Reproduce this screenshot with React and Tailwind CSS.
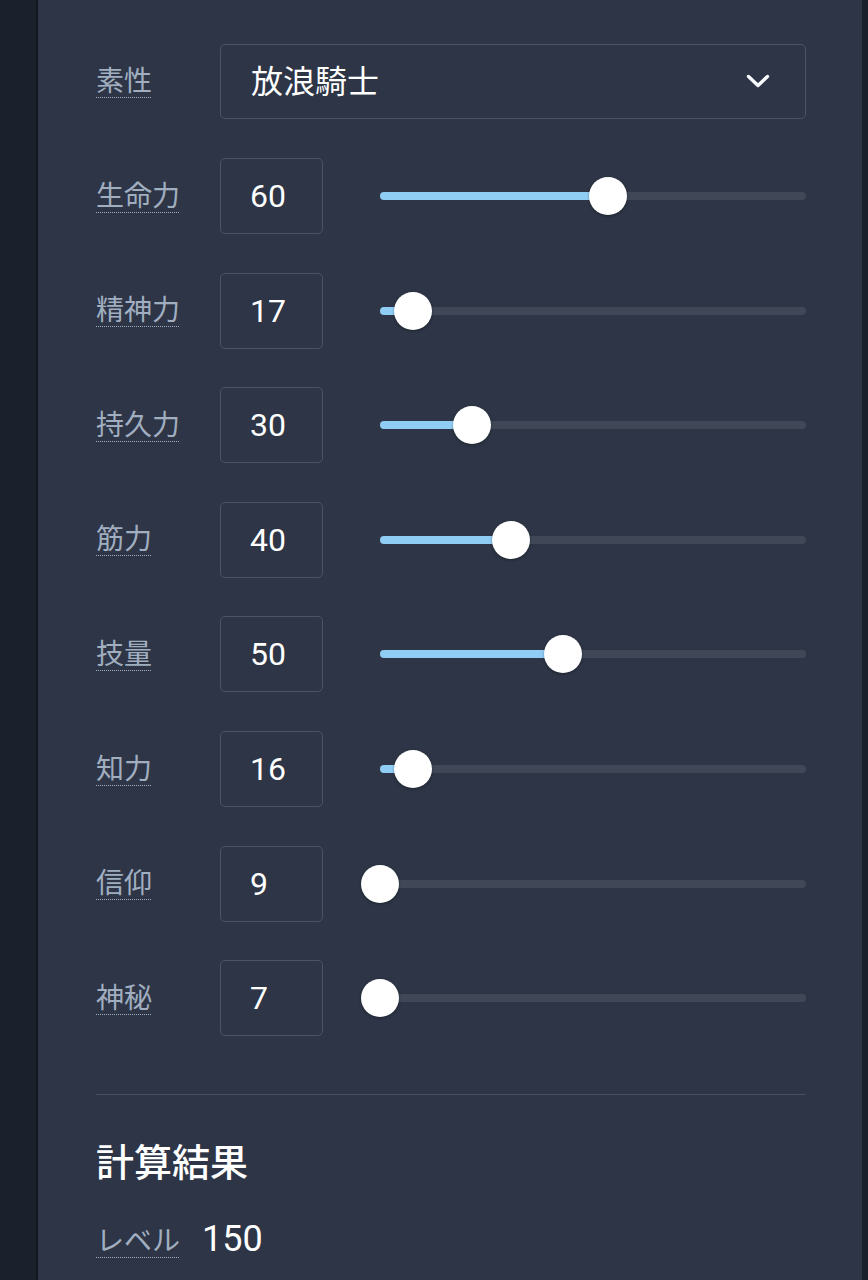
import React from "react";

const stats = [
  { label: "生命力", value: 60, pos: 0.535 },
  { label: "精神力", value: 17, pos: 0.077 },
  { label: "持久力", value: 30, pos: 0.216 },
  { label: "筋力", value: 40, pos: 0.308 },
  { label: "技量", value: 50, pos: 0.43 },
  { label: "知力", value: 16, pos: 0.077 },
  { label: "信仰", value: 9, pos: 0 },
  { label: "神秘", value: 7, pos: 0 },
];

const Label = ({ children }) => (
  <span className="text-[28px] leading-none text-[#a0aec0] underline decoration-dotted decoration-[#a0aec0] decoration-1 underline-offset-[6px]">
    {children}
  </span>
);

const Slider = ({ pos }) => (
  <div className="relative flex-1 h-[8px] rounded-full bg-[#404857]">
    <div className="absolute left-0 top-0 h-full rounded-full bg-[#90cdf4]" style={{ width: `${pos * 100}%` }} />
    <div
      className="absolute top-1/2 w-[38px] h-[38px] -translate-x-1/2 -translate-y-1/2 rounded-full bg-white shadow-[0_1px_3px_rgba(0,0,0,0.35)]"
      style={{ left: `${pos * 100}%` }}
    />
  </div>
);

export default function App() {
  return (
    <div className="flex min-h-[1280px] w-[868px] bg-[#1a202c] font-['Roboto','Noto_Sans_CJK_JP',sans-serif]">
      {/* left strip */}
      <div className="w-[36px] shrink-0 bg-[#1a202c]" />
      <div className="w-[2px] shrink-0 bg-[#13171f]" />

      {/* panel */}
      <main className="flex-1 bg-[#2d3546] pt-[44px] pl-[58px] pr-[56px]">
        <div className="flex flex-col gap-[39.6px]">
          <div className="flex items-center h-[75px]">
            <div className="w-[124px] shrink-0 pt-[3px]">
              <Label>素性</Label>
            </div>
            <div className="flex-1 h-[75px] flex items-center justify-between border border-[#4a5466] rounded-[5px] pl-[30px] pr-[35px]">
              <span className="text-[32px] text-white leading-none pb-[5px] font-['Noto_Sans_CJK_JP',sans-serif]">放浪騎士</span>
              <svg width="24" height="15" viewBox="0 0 24 15" fill="none">
                <polyline points="2.5,2.5 12,11.5 21.5,2.5" stroke="#f7fafc" strokeWidth="3.4" strokeLinecap="round" strokeLinejoin="round" />
              </svg>
            </div>
          </div>

          {stats.map((s) => (
            <div key={s.label} className="flex items-center h-[75px]">
              <div className="w-[124px] shrink-0 pt-[3px]">
                <Label>{s.label}</Label>
              </div>
              <div className="w-[103px] h-[76px] shrink-0 flex items-center border border-[#4a5466] rounded-[5px] pl-[29px]">
                <span className="text-[32px] text-white leading-none">{s.value}</span>
              </div>
              <div className="flex-1 flex items-center ml-[57px]">
                <Slider pos={s.pos} />
              </div>
            </div>
          ))}
        </div>

        <div className="mt-[58px] h-px bg-[#464e5d]" />

        <h2 className="mt-[42px] text-[38px] leading-[1.2] font-medium text-white font-['Noto_Sans_CJK_JP',sans-serif]">計算結果</h2>

        <div className="mt-[39px] flex items-baseline gap-[22px]">
          <Label>レベル</Label>
          <span className="text-[36px] text-white leading-none">150</span>
        </div>
      </main>

      {/* right strip */}
      <div className="w-[6px] shrink-0 bg-[#1a202c]" />
    </div>
  );
}
